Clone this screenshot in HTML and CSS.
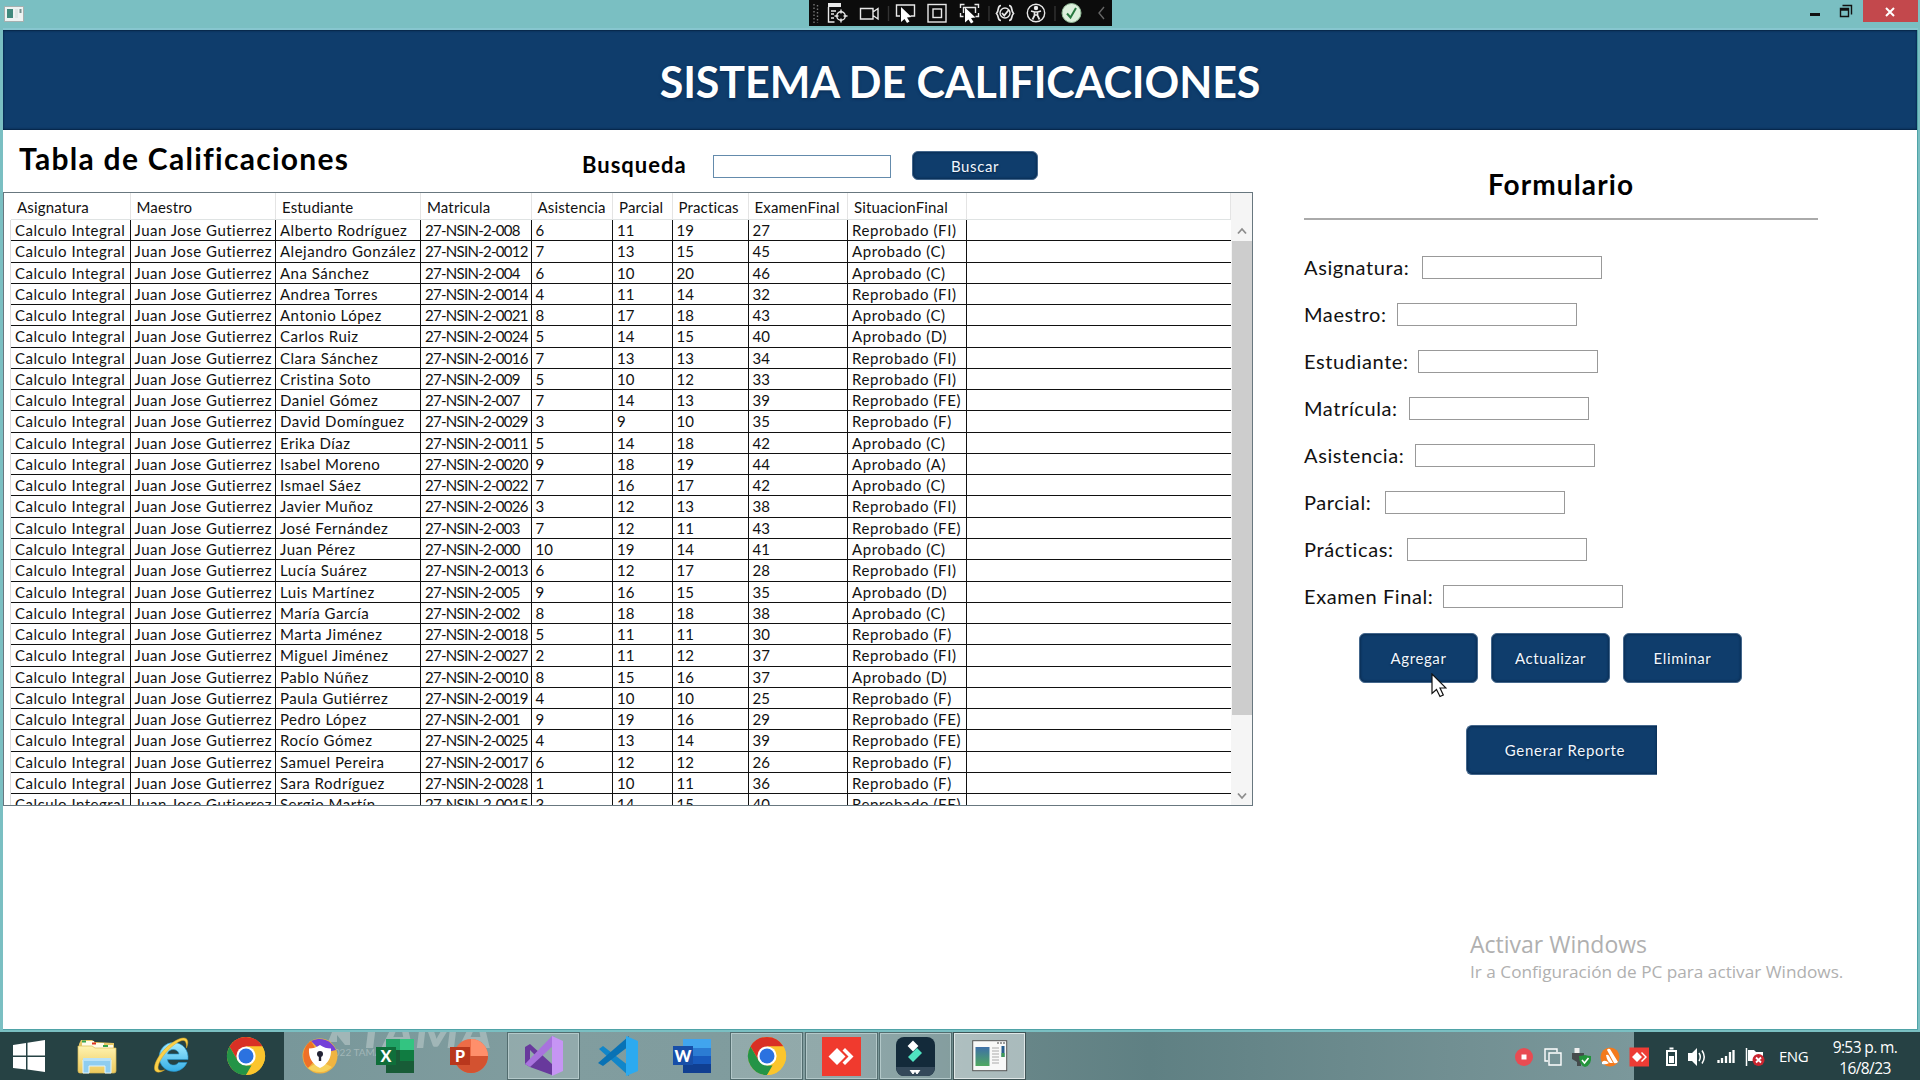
FILE: index.html
```html
<!DOCTYPE html>
<html lang="es">
<head>
<meta charset="utf-8">
<title>Sistema de Calificaciones</title>
<link rel="stylesheet" href="styles.css">
</head>
<body>
<svg width="0" height="0" class="defs">
  <defs>
    <linearGradient id="gold" x1="0" y1="0" x2="0" y2="1"><stop offset="0" stop-color="#fff3b0"/><stop offset="1" stop-color="#ecc95c"/></linearGradient>
    <linearGradient id="ieblue" x1="0" y1="0" x2="0" y2="1"><stop offset="0" stop-color="#a5ecff"/><stop offset="1" stop-color="#35aee6"/></linearGradient>
    <linearGradient id="pic" x1="0" y1="0" x2="0" y2="1"><stop offset="0" stop-color="#3e6fa8"/><stop offset="1" stop-color="#4fa860"/></linearGradient>
    <symbol id="chrome" viewBox="0 0 40 40">
      <circle cx="20" cy="20" r="19" fill="#fbc52d"/>
      <path d="M3.500 10.500A19 19 0 0 1 36.500 10.500H20L11.800 24.700Z" fill="#d93025"/>
      <path d="M3.500 10.500 11.800 24.700 20 29.500H28.200L20 39A19 19 0 0 1 3.500 10.500Z" fill="#249447"/>
      <path d="M36.500 10.500A19 19 0 0 1 20 39L28.200 24.700 28 15 20 10.500Z" fill="#fbc52d"/>
      <circle cx="20" cy="20" r="9.600" fill="#fff"/><circle cx="20" cy="20" r="7.500" fill="#2b72e0"/>
    </symbol>
  </defs>
</svg>
<div class="desktop">
  <div class="window">
    <header class="titlebar">
      <svg class="app-icon" viewBox="0 0 20 16"><rect x=".5" y=".5" width="19" height="15" fill="#eef3f2" stroke="#a5b0b0"/><rect x="3" y="3" width="6" height="9" fill="#418a7d"/><rect x="11" y="3" width="3" height="9" fill="#dfe8e6"/><rect x="15.500" y="3" width="2" height="4" fill="#76918f"/></svg>
      <div class="win-controls">
        <svg class="ctl" viewBox="0 0 44 22"><path d="M9 13h10v3H9z" fill="#111"/></svg>
        <svg class="ctl-restore" viewBox="0 0 14 14"><path d="M3.500 1.500h9v9M1.500 4.500h8v8h-8zM1.500 6h8" fill="none" stroke="#111" stroke-width="1.400"/></svg>
        <div class="close"><svg width="12" height="10" viewBox="0 0 12 10"><path d="M2 1l8 8M10 1l-8 8" stroke="#fff" stroke-width="2"/></svg></div>
      </div>
    </header>
    <div class="client">
      <h1 class="banner"><span>SISTEMA DE CALIFICACIONES</span></h1>
      <main class="content">
        <section class="grades">
          <div class="toolbar">
            <h2 class="grades-title">Tabla de Calificaciones</h2>
            <label class="search-label">Busqueda</label>
            <div class="box search-box"></div>
            <button class="btn btn-search">Buscar</button>
          </div>
          <div class="grid-frame">
            <div class="grid">
              <div class="row head"><span>Asignatura</span><span>Maestro</span><span>Estudiante</span><span>Matricula</span><span>Asistencia</span><span>Parcial</span><span>Practicas</span><span>ExamenFinal</span><span>SituacionFinal</span><span></span></div>
              <div class="rows" id="rows"></div>
            </div>
            <div class="scroll">
              <svg width="12" height="8" viewBox="0 0 12 8"><path d="M2 6.500l4-4.500 4 4.500" fill="none" stroke="#8d8d8d" stroke-width="1.800"/></svg>
              <div class="thumb"></div>
              <svg class="down" width="12" height="8" viewBox="0 0 12 8"><path d="M2 1.500l4 4.500 4-4.500" fill="none" stroke="#8d8d8d" stroke-width="1.800"/></svg>
            </div>
          </div>
        </section>
        <section class="form">
          <h2 class="form-title">Formulario</h2>
          <div class="field"><label class="f-asignatura">Asignatura:</label><div class="box"></div></div>
          <div class="field"><label class="f-maestro">Maestro:</label><div class="box"></div></div>
          <div class="field"><label class="f-estudiante">Estudiante:</label><div class="box"></div></div>
          <div class="field"><label class="f-matricula">Matrícula:</label><div class="box"></div></div>
          <div class="field"><label class="f-asistencia">Asistencia:</label><div class="box"></div></div>
          <div class="field"><label class="f-parcial">Parcial:</label><div class="box"></div></div>
          <div class="field"><label class="f-practicas">Prácticas:</label><div class="box"></div></div>
          <div class="field"><label class="f-examen">Examen Final:</label><div class="box"></div></div>
          <div class="actions"><button class="btn">Agregar</button><button class="btn">Actualizar</button><button class="btn">Eliminar</button></div>
          <button class="btn btn-report">Generar Reporte</button>
          <div class="activate"><p class="act-1">Activar Windows</p><p class="act-2">Ir a Configuración de PC para activar Windows.</p></div>
        </section>
      </main>
    </div>
  </div>

  <svg class="debugbar" viewBox="0 0 303 26" fill="none" stroke="#e8e8e8" stroke-width="1.400">
    <rect width="303" height="26" fill="#0c0c0c" stroke="none"/>
    <path d="M5 4v19M8.500 5v18" stroke="#777" stroke-dasharray="1.500 2"/>
    <path d="M19 5h13" stroke-width="4"/><path d="M19.500 7v15h6M22 11h5M22 14h3M22 18h3"/><circle cx="32" cy="16" r="4.200"/><path d="M32 9.500v4M32 18.500v4M25.500 16h4M34.500 16h4"/>
    <path d="M51.500 8.500h12.500v10.500h-12.500zM64 12l5-3.500v10.500l-5-3.500"/>
    <path d="M79.500 6v15M180 6v15M246 6v15" stroke="#333"/>
    <path d="M91 16h-3.500v-11h18v11h-4"/><path d="M92 7v15l3.500-3 2.500 4 2.500-1.500-2.500-4 4.500-.5z" fill="#fff" stroke="none"/>
    <rect x="119" y="4.500" width="18" height="17.500"/><rect x="124" y="9" width="8.500" height="8.500"/>
    <path d="M151.500 8V4.500h4M165.500 4.500h4V8M151.500 13v3.500h3M169.500 13v3.500h-3M154.500 13V7.500h12V13"/><path d="M156 7.500v15l3.500-3 2.500 4 2.500-1.500-2.500-4 4.500-.5z" fill="#fff" stroke="none"/>
    <path d="M192 5.500c-4 0-1.500 4.500-4.500 8 3 3 .5 7 4.500 7M200 5.500c4 0 1.500 4.500 4.500 8-3 3-.5 7-4.500 7" stroke-width="1.700"/><circle cx="196" cy="13" r="5"/><path d="M193 13l2.200 2.500 4.500-5.500" stroke-width="1.800"/>
    <circle cx="227" cy="13" r="8.700"/><circle cx="227" cy="8" r="1.500" fill="#fff"/><path d="M222 11l3.500 1h3l3.500-1M225.500 12v3.500l-2 4M228.500 12v3.500l2 4M225.500 15h3" stroke-width="1.700"/>
    <circle cx="262.500" cy="13" r="9.500" fill="#dcefdc" stroke="#8fb894" stroke-width="1"/><path d="M258 13.500l3.500 4 5.500-9.500" stroke="#287840" stroke-width="2"/>
    <path d="M295 7l-5 6 5 6" stroke="#666"/>
  </svg>

  <svg class="cursor" viewBox="0 0 16 26"><path d="M1 1v19.500l4.500-4 3.500 7 3.300-1.500-3.300-7H15z" fill="#fff" stroke="#111" stroke-width="1.200"/></svg>

  <footer class="taskbar">
    <div class="wallmark">
      <svg width="24" height="13" viewBox="0 0 24 13"><path d="M4 0h18v13h-5L9 3v7H0z" fill="#a1b6b7"/></svg>
      <b>TAMA</b>
    </div>
    <small class="wallnote">2022 TAMA</small>
    <nav class="apps">
      <div class="task start"><svg width="34" height="32" viewBox="0 0 34 32"><path d="M1 5l13-2v12.500H1zM15.500 2.700 33 0v15.500H15.500zM1 17h13v12.500L1 28zM15.500 17H33v15l-17.500-2.500z" fill="#fff"/></svg></div>
      <div class="task"><svg width="40" height="36" viewBox="0 0 40 36"><path d="M2 6l2-4 11 0 3 2 19 1v28l-2 2H2z" fill="#e6c766"/><path d="M5 3h12v5H5zM15 5h12v5H15zM24 7h12v5H24z" fill="#fffbe8"/><path d="M5 3.500h4M26 8h5" stroke="#35a34a" stroke-width="2"/><path d="M15 5.500h4" stroke="#d32" stroke-width="2"/><path d="M1 8h14l3 2h21v23q0 2-2 2H3q-2 0-2-2z" fill="url(#gold)" stroke="#d9b956" stroke-width=".7"/><path d="M6 35V22h28v13h-6v-7H12v7z" fill="#8fcdf0" stroke="#dff4ff"/><path d="M6 20h28v3H6z" fill="#b9e2f7"/></svg></div>
      <div class="task"><svg width="40" height="40" viewBox="0 0 40 40"><path d="M21 6.500a14.500 14.500 0 1 0 14 20h-8.500c-3 4.500-10.500 3-11-3H36c1-9-5-17-15-17zM15.500 18c.8-6 10.500-6 11.500 0z" fill="url(#ieblue)" stroke="#2395cf" stroke-width=".6"/><path d="M34.500 12C37 6 36 1.500 31 2 21 3 4 19 2.500 31c-.5 6 4.500 6.500 10 3-5 1.500-7.500 0-6-5C9 20 22 6.500 30 4.500c3.500-.7 4.700 2 4.500 7.500z" fill="#fbd049" stroke="#d9a31e" stroke-width=".5"/></svg></div>
      <div class="task"><svg width="40" height="40"><use href="#chrome"/></svg></div>
      <div class="task"><svg width="38" height="38" viewBox="0 0 38 38"><circle cx="19" cy="19" r="17.500" fill="#f0b440"/><path d="M10 4A18 18 0 0 1 35 13L22 16z" fill="#7440d8"/><path d="M10 4A18 18 0 0 0 7 31L17 20 13 9z" fill="#ef7028"/><path d="M7 31a18 18 0 0 0 24-1L19 24z" fill="#f7d25c"/><path d="M19 8q5 3.500 11 3.500Q31 25 19 31 7 25 8 11.500 14 11.500 19 8z" fill="#fff"/><circle cx="19" cy="17" r="3" fill="#223"/><path d="M17.800 18h2.400v6h-2.400z" fill="#223"/></svg></div>
      <div class="task"><svg width="40" height="36" viewBox="0 0 40 36"><path d="M11 1h28v34H11z" fill="#185c37"/><path d="M11 1h14v11H11z" fill="#21a366"/><path d="M25 1h14v11H25z" fill="#33c481"/><path d="M25 12h14v11H25z" fill="#107c41"/><path d="M1 9h20v18H1z" fill="#0f6e3a"/><text x="11" y="24" class="glyph">X</text></svg></div>
      <div class="task"><svg width="40" height="36" viewBox="0 0 40 36"><circle cx="22" cy="18" r="17" fill="#ed6c47"/><path d="M22 1a17 17 0 0 1 17 17H22z" fill="#ff8f6b"/><path d="M5 18h34a17 17 0 0 1-34 0z" fill="#d35230"/><path d="M1 9h20v18H1z" fill="#b9371c"/><text x="11" y="24" class="glyph">P</text></svg></div>
      <div class="task open"><svg width="42" height="42" viewBox="0 0 42 42"><path d="M2 12l5-3 22 20v11L7 32l-5-3zM7 15v12l6-6z" fill="#68399c" fill-rule="evenodd"/><path d="M2 29l5 3L32 9V2L29 1z" fill="#a873dd"/><path d="M29 1l11 5v30l-11 5z" fill="#c695f4"/></svg></div>
      <div class="task"><svg width="42" height="42" viewBox="0 0 42 42"><path d="M2 14l4-3 26 20v10z" fill="#1186c9"/><path d="M1 28l5 3L32 11V1z" fill="#0872b5"/><path d="M29 1l12 5v30l-12 5z" fill="#2caaf0"/></svg></div>
      <div class="task"><svg width="40" height="36" viewBox="0 0 40 36"><path d="M11 1h28v9H11z" fill="#41a5ee"/><path d="M11 10h28v8H11z" fill="#2b7cd3"/><path d="M11 18h28v8H11z" fill="#185abd"/><path d="M11 26h28v9H11z" fill="#103f91"/><path d="M1 8h20v19H1z" fill="#174ea8"/><text x="11" y="23.500" class="glyph">W</text></svg></div>
      <div class="task open"><svg width="40" height="40"><use href="#chrome"/></svg></div>
      <div class="task open"><svg width="39" height="39" viewBox="0 0 39 39"><path d="M0 0h39v39H0z" fill="#f03a2e"/><path d="M15 11l8.500 8.500L15 28l-8.500-8.500zM20.500 13.500l2.500-2.500 8.500 8.500L23 28l-2.500-2.500 6-6z" fill="#fff"/></svg></div>
      <div class="task open"><svg width="39" height="39" viewBox="0 0 39 39"><rect width="39" height="39" rx="8" fill="#132a3a"/><path d="M0 30h39q-1 9-8 9H8q-7 0-8-9z" fill="#34495a"/><path d="M17 5l4 4-4 4-4-4z" fill="#fff" stroke="#fff" stroke-width="2"/><path d="M12 20l9-9 5 5-9 9z" fill="#50e3c2"/><path d="M14 33l3 4 2-3 2 3 3-4" fill="#fff" stroke="#fff"/></svg></div>
      <div class="task active"><svg width="36" height="32" viewBox="0 0 36 32"><rect x=".7" y=".7" width="34" height="30" fill="#f8f8f8" stroke="#555"/><path d="M25 3h2M28 3h2M31 3h2" stroke="#444"/><rect x="3.500" y="7" width="14" height="19" fill="url(#pic)"/><path d="M20 8h7M20 11h7M20 14h7M20 17h7M20 20h7M20 23h7" stroke="#aaa"/><path d="M29.500 6h3v11h-3z" fill="#275c8d"/><path d="M29.500 13h3v4h-3z" fill="#3f9b57"/></svg></div>
    </nav>
    <div class="tray">
      <svg class="tray-icons" viewBox="0 0 258 48">
        <circle cx="14" cy="25" r="9" fill="#e84b52"/><path d="M11.500 22.500h5v5h-5z" fill="#fff"/>
        <path d="M38 29h-3V17h12v3M39 21h12v12H39z" fill="none" stroke="#fff" stroke-width="1.400"/>
        <path d="M62 21h12v6l-3 3v4h-4v-4l-5-3z" fill="#454b4c"/><path d="M64.500 16h5v5h-5z" fill="#eee"/><path d="M75 23q3 1 6 1 1 9-6 11-6-2-6-11 3 0 6-1z" fill="#22943b"/><path d="M72 28l2.500 3 4-5" stroke="#fff" stroke-width="1.600" fill="none"/>
        <circle cx="100" cy="25" r="9.500" fill="#f37a1c"/><path d="M97 18q1-2 3-1l8 13q-2 2-4 1zM96 23q2-1 3 1l4 7h-3q-3-2-4-8zM92 30q3-3 7 1-3 2-7 1z" fill="#fff"/>
        <path d="M119.500 15.500H139v19h-19.500z" fill="#ed3c35"/><path d="M127 20l5 5-5 5-5-5zM131 21l1-1 5 5-5 5-1-1 4-4z" fill="#fff"/>
        <path d="M157 19h9v14h-9zM159.500 16.500h4" fill="none" stroke="#fff" stroke-width="2"/><path d="M159 24h5v7h-5z" fill="#fff"/>
        <path d="M178 21h4l5-5v18l-5-5h-4z" fill="#fff"/><path d="M189 21q2.500 4 0 8M192 18.500q4.500 6.500 0 13" stroke="#fff" stroke-width="1.500" fill="none"/>
        <path d="M208.500 31v-3M212 31v-5M216 31v-7M220 31V20M223.500 31V18" stroke="#fff" stroke-width="2.300"/>
        <path d="M236.500 16v18" stroke="#fff" stroke-width="1.500"/><path d="M238 18h6l2 2h7v9h-15z" fill="#fff"/><circle cx="248.500" cy="28" r="6" fill="#c9252f"/><path d="M246 25.500l5 5M251 25.500l-5 5" stroke="#fff" stroke-width="1.800"/>
      </svg>
      <span class="lang">ENG</span>
      <div class="clock"><span>9:53 p. m.</span><span>16/8/23</span></div>
    </div>
  </footer>
</div>
<script src="script.js"></script>
</body>
</html>
```
FILE: styles.css
```css
* { box-sizing: border-box; margin: 0; }
body { width: 1920px; height: 1080px; overflow: hidden; font-family: Lato, "Open Sans", sans-serif; color: #111; }
.defs { position: absolute; }
.desktop { position: relative; height: 1080px; display: flex; flex-direction: column; }

/* Window frame */
.window { height: 1032px; background: #7abfc2; padding: 0 2px 2px 3px; display: flex; flex-direction: column; }
.titlebar { height: 30px; display: flex; justify-content: space-between; border-bottom: 2px solid #87c6cf; }
.app-icon { width: 20px; height: 16px; margin: 6px 0 0 1px; }
.win-controls { display: flex; }
.ctl { width: 44px; height: 22px; margin-right: -6px; }
.ctl-restore { width: 14px; height: 14px; margin: 4px 10px 0 0; }
.close { width: 55px; height: 22px; background: #c3484c; display: flex; align-items: center; justify-content: center; padding: 2px 2px 0 0; }
.client { flex: 1; background: #fff; border-right: 1px solid #4fa3a7; border-bottom: 1px solid #4fa3a7; display: flex; flex-direction: column; }
.banner { height: 100px; background: #0f3d6c; box-shadow: inset 0 1px 2px #072444, inset 0 -1px 2px #072444; color: #fff; display: flex; justify-content: center; align-items: center; padding-top: 3px; font-size: 43px; font-weight: 700; white-space: nowrap; letter-spacing: -.1px; text-shadow: 0 1px 3px #092a50; }
.content { flex: 1; display: flex; }

/* Grades panel */
.grades { width: 1250px; }
.toolbar { height: 62px; display: flex; align-items: flex-start; white-space: nowrap; }
.grades-title { width: 579px; padding: 11px 0 0 16px; font-size: 30px; line-height: 35px; font-weight: 700; letter-spacing: 1.280px; color: #000; }
.search-label { width: 131px; font-size: 22px; line-height: 28px; padding-top: 21px; font-weight: 700; color: #000; letter-spacing: 1px; }
.box { width: 180px; height: 23px; border: 1px solid #999; background: #fff; }
.search-box { width: 178px; margin: 25px 21px 0 0; border-color: #648bac; }
.btn { font-family: inherit; padding: 0; border: 1px solid #44678c; border-radius: 6px; background: #0f3d6c; box-shadow: inset 0 0 3px #061f3d; color: #f1f7ff; font-size: 15px; text-shadow: 0 1px 2px #05213f; letter-spacing: .6px; }
.btn-search { width: 126px; height: 29px; margin-top: 21px; }

.grid-frame { height: 614px; border: 1px solid #68777f; display: flex; }
.grid { width: 1227px; overflow: hidden; padding-left: 7px; }
.row { display: grid; grid-template-columns: 119.500px 145.500px 145px 110.500px 81.500px 59.500px 76px 99.500px 119px 1fr; height: 21.270px; border-bottom: 1px solid #111; white-space: nowrap; font-size: 15px; line-height: 21px; }
.row span { border-right: 1px solid #111; padding-left: 4px; overflow: hidden; }
.row span:last-child { border-right: 0; }
.rows { border-left: 1px solid #ddd; margin-left: -1px; }
.head { height: 27px; border-color: #dfe3e3; line-height: 29px; letter-spacing: .15px; }
.head span { border-color: #e4e4e4; padding-left: 6px; }
.head span:last-child { border-right: 1px solid #e4e4e4; }
.name { letter-spacing: .5px; }
.row .id { letter-spacing: -.72px; }
.row .status { letter-spacing: .6px; }
.scroll { width: 21px; background: #f5f5f5; display: flex; flex-direction: column; align-items: center; padding-top: 34px; }
.thumb { width: 20px; height: 474px; background: #cdcdcd; margin: 6px 0 77px; flex: none; }

/* Form panel */
.form { padding-left: 51px; display: flex; flex-direction: column; align-items: flex-start; white-space: nowrap; }
.form-title { width: 514px; height: 90px; padding-top: 37px; margin-bottom: 24px; text-align: center; font-size: 28px; line-height: 34px; font-weight: 700; color: #000; border-bottom: 2px solid #aaa; letter-spacing: 1.100px; }
.field { height: 47.100px; display: flex; align-items: center; font-size: 20px; line-height: 26px; letter-spacing: .6px; }
.field label { padding-bottom: 2px; }
.field .box { margin-bottom: 1px; }
.f-asignatura { width: 118px; } .f-maestro { width: 93px; } .f-estudiante { width: 114px; } .f-matricula { width: 104.500px; }
.f-asistencia { width: 110.500px; } .f-parcial { width: 81px; } .f-practicas { width: 103px; } .f-examen { width: 139px; }
.actions { display: flex; gap: 13px; padding: 12px 0 0 55px; }
.actions .btn { width: 119px; height: 50px; }
.btn-report { width: 191px; height: 50px; margin: 42px 0 0 162px; padding-left: 6px; border-radius: 6px 0 0 6px; border-right: 0; letter-spacing: .75px; }
.activate { padding: 152px 0 0 166px; font-family: "Open Sans", "Noto Sans", sans-serif; color: #b0b0b0; }
.act-1 { font-size: 23px; line-height: 34px; }
.act-2 { font-size: 17.200px; line-height: 21px; }

/* Overlays */
.debugbar { position: absolute; left: 809px; top: 0; width: 303px; height: 26px; }
.cursor { position: absolute; left: 1431px; top: 673px; width: 16px; height: 26px; }

/* Taskbar */
.taskbar { position: relative; height: 48px; background: linear-gradient(90deg, #264244 284px, #78979a 284px, #819d9f 560px, #7f9b9d 850px, #698789 1000px, #5f8083 1150px, #718f92 1450px, #7b989b 1634px, #264144 1634px); display: flex; justify-content: space-between; }
.wallmark { position: absolute; left: 328px; top: 0; height: 16px; width: 180px; overflow: hidden; color: #a1b6b7; display: flex; align-items: flex-end; gap: 5px; padding-bottom: 3px; }
.wallmark b { font: italic 900 50px/36px Lato, sans-serif; margin-bottom: -5px; }
.wallnote { position: absolute; left: 328px; top: 14px; font-size: 10px; line-height: 12px; color: #a1b6b7; }
.apps { position: relative; display: flex; gap: 3.400px; padding-top: 1px; }
.task { width: 71px; height: 46px; display: flex; align-items: center; justify-content: center; }
.task.start { width: 58.400px; }
.task.open { border: 1px solid #b3c8c9; background: #ffffff24; outline: 1px solid #526c6e; }
.task.active { border: 1px solid #dfe7e7; background: #ffffff70; outline: 1px solid #3f5456; }
.glyph { font: 900 16px Lato, sans-serif; fill: #fff; text-anchor: middle; }
.tray { display: flex; align-items: center; color: #fff; font-family: "Open Sans", sans-serif; }
.tray-icons { width: 258px; height: 48px; }
.lang { width: 54px; padding-left: 11px; font-size: 15px; letter-spacing: -.5px; }
.clock { width: 98px; display: flex; flex-direction: column; align-items: center; font-size: 15.500px; letter-spacing: -.6px; line-height: 21px; padding: 3px 12px 0 0; white-space: nowrap; }
```
FILE: script.js
```js
// estudiante | matrícula | asistencia | parcial | prácticas | examen | situación
const data = `Alberto Rodríguez|008|6|11|19|27|R FI
Alejandro González|0012|7|13|15|45|A C
Ana Sánchez|004|6|10|20|46|A C
Andrea Torres|0014|4|11|14|32|R FI
Antonio López|0021|8|17|18|43|A C
Carlos Ruiz|0024|5|14|15|40|A D
Clara Sánchez|0016|7|13|13|34|R FI
Cristina Soto|009|5|10|12|33|R FI
Daniel Gómez|007|7|14|13|39|R FE
David Domínguez|0029|3|9|10|35|R F
Erika Díaz|0011|5|14|18|42|A C
Isabel Moreno|0020|9|18|19|44|A A
Ismael Sáez|0022|7|16|17|42|A C
Javier Muñoz|0026|3|12|13|38|R FI
José Fernández|003|7|12|11|43|R FE
Juan Pérez|000|10|19|14|41|A C
Lucía Suárez|0013|6|12|17|28|R FI
Luis Martínez|005|9|16|15|35|A D
María García|002|8|18|18|38|A C
Marta Jiménez|0018|5|11|11|30|R F
Miguel Jiménez|0027|2|11|12|37|R FI
Pablo Núñez|0010|8|15|16|37|A D
Paula Gutiérrez|0019|4|10|10|25|R F
Pedro López|001|9|19|16|29|R FE
Rocío Gómez|0025|4|13|14|39|R FE
Samuel Pereira|0017|6|12|12|26|R F
Sara Rodríguez|0028|1|10|11|36|R F
Sergio Martín|0015|3|14|15|40|R FE`;

const classes = { 0: 'name', 1: 'name', 2: 'name', 3: 'id', 8: 'status' };
const rows = document.getElementById('rows');
for (const line of data.split('\n')) {
  const [name, id, att, mid, prac, exam, status] = line.split('|');
  const [result, code] = status.split(' ');
  const cells = ['Calculo Integral', 'Juan Jose Gutierrez', name, '27-NSIN-2-' + id, att, mid, prac, exam,
    (result === 'A' ? 'Aprobado' : 'Reprobado') + ' (' + code + ')', ''];
  const row = document.createElement('div');
  row.className = 'row';
  cells.forEach((text, i) => {
    const cell = document.createElement('span');
    cell.textContent = text;
    if (classes[i]) cell.className = classes[i];
    row.append(cell);
  });
  rows.append(row);
}
```
